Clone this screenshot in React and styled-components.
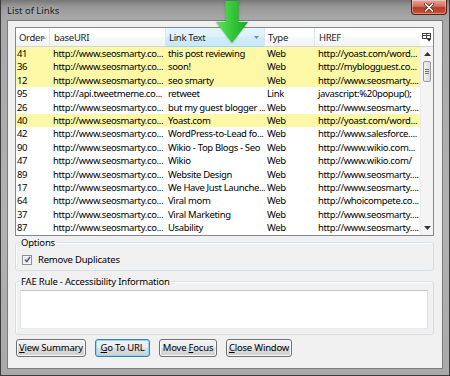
import React from 'react';
import styled, { createGlobalStyle } from 'styled-components';

const GlobalStyle = createGlobalStyle`
  html, body { margin:0; padding:0; background:#fff; }
  body {
    width:450px;
    height:376px;
    overflow:hidden;
    font-family:"Noto Sans", "Liberation Sans", sans-serif;
  }
  * { box-sizing:border-box; }
`;

const COLS = [34, 116, 99, 50, 105];

const rows = [
  ['41', 'http://www.seosmarty.co...', 'this post reviewing', 'Web', 'http://yoast.com/word...', true],
  ['36', 'http://www.seosmarty.co...', 'soon!', 'Web', 'http://myblogguest.co...', true],
  ['12', 'http://www.seosmarty.co...', 'seo smarty', 'Web', 'http://www.seosmarty....', true],
  ['95', 'http://api.tweetmeme.co...', 'retweet', 'Link', 'javascript:%20popup();'],
  ['26', 'http://www.seosmarty.co...', 'but my guest blogger ...', 'Web', 'http://www.seosmarty....'],
  ['40', 'http://www.seosmarty.co...', 'Yoast.com', 'Web', 'http://yoast.com/word...', true],
  ['42', 'http://www.seosmarty.co...', 'WordPress-to-Lead fo...', 'Web', 'http://www.salesforce....'],
  ['90', 'http://www.seosmarty.co...', 'Wikio - Top Blogs - Seo', 'Web', 'http://www.wikio.com...'],
  ['47', 'http://www.seosmarty.co...', 'Wikio', 'Web', 'http://www.wikio.com/'],
  ['89', 'http://www.seosmarty.co...', 'Website Design', 'Web', 'http://www.seosmarty....'],
  ['17', 'http://www.seosmarty.co...', 'We Have Just Launche...', 'Web', 'http://www.seosmarty....'],
  ['64', 'http://www.seosmarty.co...', 'Viral mom', 'Web', 'http://whoicompete.co...'],
  ['37', 'http://www.seosmarty.co...', 'Viral Marketing', 'Web', 'http://www.seosmarty....'],
  ['87', 'http://www.seosmarty.co...', 'Usability', 'Web', 'http://www.seosmarty....'],
];

const cellPad = [1, 3, 2, 2, 3];

export default function App() {
  return (
    <>
      <GlobalStyle />
      <Window>
        <TitleBar>
          <Title>List of Links</Title>
          <CloseButton>
            <svg width="10" height="9" viewBox="0 0 10 9">
              <path d="M1.5 1 L8.5 8 M8.5 1 L1.5 8" stroke="#5a1a14" strokeWidth="3" strokeLinecap="round" />
              <path d="M1.5 1 L8.5 8 M8.5 1 L1.5 8" stroke="#fff" strokeWidth="1.7" strokeLinecap="round" />
            </svg>
          </CloseButton>
        </TitleBar>

        <Client>
          <ListBox>
            <Header>
              <HeaderCell $w={COLS[0]} $pad={3}>
                Order
                <SortMark width="5" height="3" viewBox="0 0 5 3">
                  <path d="M0 3 L2.5 0 L5 3 Z" fill="#8aa4c0" />
                </SortMark>
              </HeaderCell>
              <HeaderCell $w={COLS[1]} $pad={4}>baseURI</HeaderCell>
              <HeaderCell $w={COLS[2]} $pad={3} $active>
                Link Text
                <DropMark width="5" height="3" viewBox="0 0 5 3">
                  <path d="M0 0 L2.5 3 L5 0 Z" fill="#7e8a96" />
                </DropMark>
              </HeaderCell>
              <HeaderCell $w={COLS[3]} $pad={3}>Type</HeaderCell>
              <HeaderCell $w={COLS[4]} $pad={4} $last>HREF</HeaderCell>
              <Chooser>
                <svg width="10" height="9" viewBox="0 0 10 9">
                  <rect x="0.5" y="0.5" width="8" height="5" fill="none" stroke="#444" />
                  <path d="M0.5 2.5 H8.5 M4.5 0.5 V5.5" stroke="#444" />
                  <path d="M5 6 L9 6 L7 8.5 Z" fill="#222" />
                </svg>
              </Chooser>
            </Header>

            <Body>
              <Rows>
                {rows.map((r, i) => (
                  <Row key={i} $hl={r[5]}>
                    {r.slice(0, 5).map((c, j) => (
                      <Cell key={j} $pad={cellPad[j]}>{c}</Cell>
                    ))}
                  </Row>
                ))}
              </Rows>
              <Scrollbar>
                <ScrollArrow>
                  <svg width="7" height="4" viewBox="0 0 7 4"><path d="M0 4 L3.5 0 L7 4 Z" fill="#333" /></svg>
                </ScrollArrow>
                <Thumb>
                  <span /><span /><span />
                </Thumb>
                <Track />
                <ScrollArrow>
                  <svg width="7" height="4" viewBox="0 0 7 4"><path d="M0 0 L3.5 4 L7 0 Z" fill="#333" /></svg>
                </ScrollArrow>
              </Scrollbar>
            </Body>
          </ListBox>

          <Group $top={1} $padTop={5} $padBottom={4}>
            <legend>Options</legend>
            <CheckRow>
              <CheckBox>
                <svg width="7" height="7" viewBox="0 0 7 7">
                  <path d="M1 3.6 L2.8 5.6 L6 1" fill="none" stroke="#3d5488" strokeWidth="1.4" />
                </svg>
              </CheckBox>
              Remove Duplicates
            </CheckRow>
          </Group>

          <Group $top={5} $padTop={2.5} $padBottom={5}>
            <legend>FAE Rule - Accessibility Information</legend>
            <InfoBox />
          </Group>

          <ButtonBar>
            <Button $w={70}><u>V</u>iew Summary</Button>
            <Button $w={55} $default><u>G</u>o To URL</Button>
            <Button $w={58}>Move <u>F</u>ocus</Button>
            <Button $w={66}><u>C</u>lose Window</Button>
          </ButtonBar>
        </Client>

        <Pointer width="34" height="45" viewBox="0 0 34 45">
          <defs>
            <linearGradient id="arrowFill" x1="0" y1="0" x2="1" y2="0">
              <stop offset="0" stopColor="#62e35c" />
              <stop offset="0.5" stopColor="#35c83a" />
              <stop offset="1" stopColor="#1fa52a" />
            </linearGradient>
          </defs>
          <path d="M10.5 1 H23.5 V22 H33 L17 43 L1 22 H10.5 Z" fill="url(#arrowFill)" />
        </Pointer>
      </Window>
    </>
  );
}

const Window = styled.div`
  position:relative;
  width:450px;
  height:376px;
  display:flex;
  flex-direction:column;
  padding:0 6px 6px 6px;
  border:1px solid #3d3d3d;
  border-top:none;
  background:linear-gradient(to bottom, #767676 0px, #959595 6px, #a8a8a8 18px, #b2b2b2 60%, #a9a9a9 100%);
`;

const TitleBar = styled.div`
  height:20px;
  display:flex;
  justify-content:space-between;
  align-items:flex-start;
`;

const Title = styled.div`
  padding-top:5px;
  font-size:9.5px;
  line-height:12px;
  color:#1b1b1b;
  text-shadow:0 0 6px rgba(255,255,255,0.6);
`;

const CloseButton = styled.div`
  width:36px;
  height:15px;
  margin-right:-4px;
  display:flex;
  align-items:center;
  justify-content:center;
  border:1px solid #5b1f1a;
  border-top:none;
  border-radius:0 0 4px 4px;
  background:linear-gradient(to bottom, #e2a79d 0%, #d2705f 45%, #b83a26 55%, #c9533b 100%);
  box-shadow:inset 0 0 0 1px rgba(255,255,255,0.35);
`;

const Client = styled.div`
  flex:1;
  display:flex;
  flex-direction:column;
  background:#f0f0f0;
  border:1px solid #7c7c7c;
  padding:6px 8px 0 7px;
`;

const ListBox = styled.div`
  height:208.6px;
  display:flex;
  flex-direction:column;
  background:#fff;
  border:1px solid #828790;
`;

const Header = styled.div`
  height:19px;
  display:flex;
  flex-shrink:0;
`;

const HeaderCell = styled.div`
  position:relative;
  width:${p => p.$w}px;
  padding-left:${p => p.$pad}px;
  display:flex;
  align-items:center;
  font-size:9.5px;
  color:#1e1e1e;
  letter-spacing:-0.3px;
  border-right:${p => (p.$last ? 'none' : '1px solid #e3e4e6')};
  background:${p =>
    p.$active
      ? 'linear-gradient(to bottom, #e6f5fd 0%, #dcf1fc 50%, #d1ecfb 51%, #c9e8fa 100%)'
      : 'linear-gradient(to bottom, #ffffff 0%, #ffffff 50%, #f8f9fa 51%, #f2f3f5 100%)'};
  border-bottom:1px solid ${p => (p.$active ? '#96d9f9' : '#d5d5d5')};
`;

const SortMark = styled.svg`
  position:absolute;
  right:3px;
  top:8px;
`;

const DropMark = styled.svg`
  position:absolute;
  right:5px;
  top:8px;
`;

const Chooser = styled.div`
  width:13px;
  display:flex;
  align-items:center;
  justify-content:center;
  border-bottom:1px solid #d5d5d5;
  background:#fff;
`;

const Body = styled.div`
  flex:1;
  display:flex;
  overflow:hidden;
`;

const Rows = styled.div`
  flex:1;
  display:flex;
  flex-direction:column;
`;

const Row = styled.div`
  display:grid;
  grid-template-columns:${COLS.map(c => c + 'px').join(' ')};
  height:13.4px;
  flex-shrink:0;
  align-items:center;
  background:${p => (p.$hl ? '#fdf8a6' : '#fff')};
`;

const Cell = styled.div`
  padding-left:${p => p.$pad}px;
  font-size:9.5px;
  line-height:13.4px;
  color:#000;
  white-space:nowrap;
  overflow:hidden;
  letter-spacing:-0.36px;
`;

const Scrollbar = styled.div`
  width:13px;
  display:flex;
  flex-direction:column;
  background:#f4f4f4;
  border-left:1px solid #ececec;
`;

const ScrollArrow = styled.div`
  height:13px;
  display:flex;
  align-items:center;
  justify-content:center;
`;

const Thumb = styled.div`
  height:21px;
  margin:1px 2px 0 1.5px;
  display:flex;
  flex-direction:column;
  align-items:center;
  justify-content:center;
  gap:1px;
  border:1px solid #9a9a9a;
  border-radius:2px;
  background:linear-gradient(to right, #f3f3f3, #e6e6e6 50%, #d8d8d8);
  span {
    width:4px;
    height:1px;
    background:#707070;
  }
`;

const Track = styled.div`
  flex:1;
`;

const Group = styled.fieldset`
  margin:${p => p.$top}px 0 0 0;
  padding:${p => p.$padTop}px 5px ${p => p.$padBottom}px 4px;
  min-width:0;
  border:1px solid #d5dfe5;
  border-radius:3px;
  box-shadow:inset 1px 1px 0 #fff;
  legend {
    padding:0 1px;
    margin:0;
    font-size:9.5px;
    line-height:12px;
    color:#000;
    letter-spacing:-0.2px;
  }
`;

const CheckRow = styled.div`
  height:12px;
  display:flex;
  align-items:center;
  gap:6px;
  padding-left:2px;
  font-size:9.5px;
  color:#000;
  letter-spacing:-0.2px;
`;

const CheckBox = styled.span`
  width:10px;
  height:10px;
  display:flex;
  align-items:center;
  justify-content:center;
  border:1px solid #8e8f8f;
  background:linear-gradient(135deg, #e0e0e0, #f8f8f8);
  box-shadow:inset 0 0 0 1px #f4f4f4;
`;

const InfoBox = styled.div`
  height:39px;
  background:#fff;
  border:1px solid;
  border-color:#c4c6cc #dbdfe6 #e3e9ef #e2e3ea;
`;

const ButtonBar = styled.div`
  display:flex;
  gap:9px;
  margin:4px 0 0 1px;
`;

const Button = styled.button`
  width:${p => p.$w}px;
  height:17.5px;
  padding:0;
  font-family:inherit;
  font-size:9.5px;
  color:#000;
  letter-spacing:-0.2px;
  border:1px solid ${p => (p.$default ? '#3c7fb1' : '#707070')};
  border-radius:3px;
  background:linear-gradient(to bottom, #f2f2f2 0%, #ebebeb 50%, #dddddd 51%, #cfcfcf 100%);
  box-shadow:inset 0 0 0 1px ${p => (p.$default ? '#8fd8f5' : '#fbfbfb')};
  u { text-decoration:underline; }
`;

const Pointer = styled.svg`
  position:absolute;
  left:214px;
  top:0;
  filter:drop-shadow(0 0 1px rgba(0,80,0,0.4));
`;
